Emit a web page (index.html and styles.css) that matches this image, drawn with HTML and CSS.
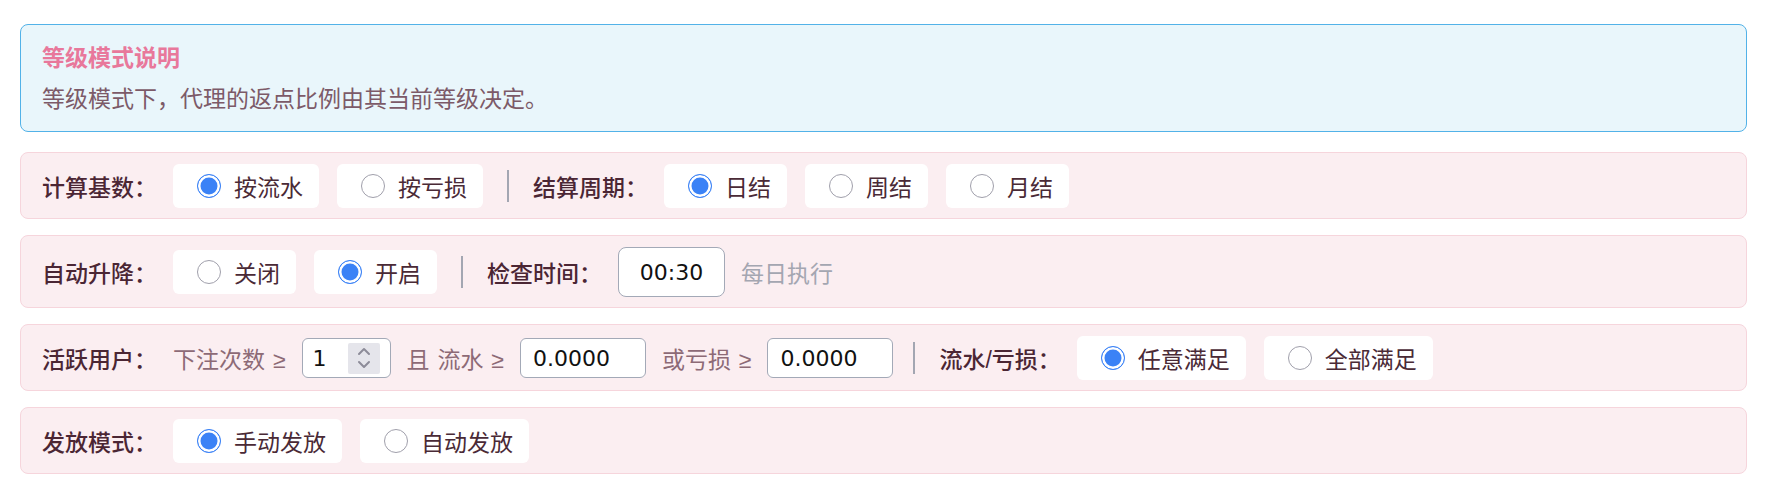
FILE: index.html
```html
<!DOCTYPE html>
<html lang="zh-CN">
  <head>
    <meta charset="UTF-8">
    <title>等级模式设置</title>
    <link rel="stylesheet" href="styles.css">
  </head>
  <body>
    <div class="container">
      <!-- 说明提示框 -->
      <div class="notice">
        <div class="notice-title">等级模式说明</div>
        <div class="notice-text">等级模式下，代理的返点比例由其当前等级决定。</div>
      </div>

      <!-- 计算基数 / 结算周期 -->
      <div class="setting-row">
        <span class="row-label">计算基数：</span>
        <div class="radio-group">
          <label class="radio-pill"><input type="radio" name="base" checked><span>按流水</span></label>
          <label class="radio-pill"><input type="radio" name="base"><span>按亏损</span></label>
        </div>
        <span class="divider"></span>
        <span class="row-label">结算周期：</span>
        <div class="radio-group">
          <label class="radio-pill"><input type="radio" name="cycle" checked><span>日结</span></label>
          <label class="radio-pill"><input type="radio" name="cycle"><span>周结</span></label>
          <label class="radio-pill"><input type="radio" name="cycle"><span>月结</span></label>
        </div>
      </div>

      <!-- 自动升降 / 检查时间 -->
      <div class="setting-row">
        <span class="row-label">自动升降：</span>
        <div class="radio-group">
          <label class="radio-pill"><input type="radio" name="auto"><span>关闭</span></label>
          <label class="radio-pill"><input type="radio" name="auto" checked><span>开启</span></label>
        </div>
        <span class="divider"></span>
        <span class="row-label">检查时间：</span>
        <input type="text" class="time-input" value="00:30">
        <span class="hint">每日执行</span>
      </div>

      <!-- 活跃用户条件 -->
      <div class="setting-row">
        <span class="row-label">活跃用户：</span>
        <span class="cond-text">下注次数 ≥</span>
        <div class="number-box">
          <input type="text" value="1">
          <span class="spinner">
            <svg width="14" height="24" viewBox="0 0 14 24" fill="none" stroke="#8d8c99" stroke-width="2" stroke-linecap="round" stroke-linejoin="round">
              <polyline points="2,8 7,3 12,8"></polyline>
              <polyline points="2,16 7,21 12,16"></polyline>
            </svg>
          </span>
        </div>
        <span class="cond-text">且 流水 ≥</span>
        <input type="text" class="amount-input" value="0.0000">
        <span class="cond-text">或亏损 ≥</span>
        <input type="text" class="amount-input" value="0.0000">
        <span class="divider divider-tight"></span>
        <span class="row-label">流水/亏损：</span>
        <div class="radio-group">
          <label class="radio-pill"><input type="radio" name="match" checked><span>任意满足</span></label>
          <label class="radio-pill"><input type="radio" name="match"><span>全部满足</span></label>
        </div>
      </div>

      <!-- 发放模式 -->
      <div class="setting-row">
        <span class="row-label">发放模式：</span>
        <div class="radio-group">
          <label class="radio-pill"><input type="radio" name="payout" checked><span>手动发放</span></label>
          <label class="radio-pill"><input type="radio" name="payout"><span>自动发放</span></label>
        </div>
      </div>
    </div>
  </body>
</html>
```

FILE: styles.css
```css
body {
  margin: 0;
  padding: 24px 19px 0 20px;
  background: #ffffff;
  font-family: "Liberation Sans", "Noto Sans CJK SC", sans-serif;
  font-size: 23px;
  color: #4b2835;
}

/* 顶部说明框 */
.notice {
  background: #e9f6fb;
  border: 1px solid #52b2e8;
  border-radius: 8px;
  padding: 16px 21px 15px;
  margin-bottom: 20px;
}

.notice-title {
  color: #e8789b;
  font-weight: 600;
  line-height: 34px;
  margin-bottom: 7px;
}

.notice-text {
  color: #7c5a68;
  line-height: 34px;
}

/* 每一行设置 */
.setting-row {
  display: flex;
  align-items: center;
  gap: 16px;
  background: #fbeef1;
  border: 1px solid #f6d5dc;
  border-radius: 8px;
  padding: 11px 21px 10px;
  margin-bottom: 16px;
}

.row-label {
  font-weight: 500;
  color: #4b2634;
  white-space: nowrap;
}

.radio-group {
  display: flex;
  gap: 18px;
}

.radio-pill {
  display: flex;
  align-items: center;
  gap: 13px;
  height: 44px;
  padding: 0 16px 0 24px;
  background: #ffffff;
  border-radius: 6px;
  color: #4a2a36;
  cursor: pointer;
}

.radio-pill input {
  appearance: none;
  -webkit-appearance: none;
  margin: 0;
  width: 24px;
  height: 24px;
  border: 1.5px solid #a09fab;
  border-radius: 50%;
  background: #ffffff;
}

.radio-pill input:checked {
  border-color: #3b82f6;
  background: #3b82f6;
  box-shadow: inset 0 0 0 2.5px #ffffff;
}

/* 竖分隔线 */
.divider {
  width: 2px;
  height: 32px;
  margin: 0 8px;
  background: #a3a6b2;
}

.divider-tight {
  margin-left: 4px;
}

.hint {
  color: #a4a6b1;
}

.cond-text {
  color: #8d6a76;
  white-space: nowrap;
  word-spacing: 1.5px;
}

/* 输入框 */
.time-input,
.amount-input,
.number-box {
  box-sizing: border-box;
  border: 1px solid #a3a9b7;
  background: #ffffff;
  font-family: "DejaVu Sans", sans-serif;
  font-size: 22px;
  color: #111111;
  outline: none;
}

.time-input {
  width: 107px;
  height: 50px;
  border-radius: 8px;
  text-align: center;
  padding: 0;
}

.amount-input {
  width: 126px;
  height: 40px;
  border-radius: 6px;
  padding: 0 12px;
}

.number-box {
  display: flex;
  align-items: center;
  width: 89px;
  height: 40px;
  border-radius: 6px;
  padding: 0 10px 0 10px;
}

.number-box input {
  flex: 1;
  min-width: 0;
  border: 0;
  padding: 0;
  outline: none;
  font: inherit;
  color: inherit;
  background: transparent;
}

.spinner {
  display: flex;
  align-items: center;
  justify-content: center;
  width: 32px;
  height: 31px;
  background: #e5e5eb;
  border-radius: 2px;
}
```
